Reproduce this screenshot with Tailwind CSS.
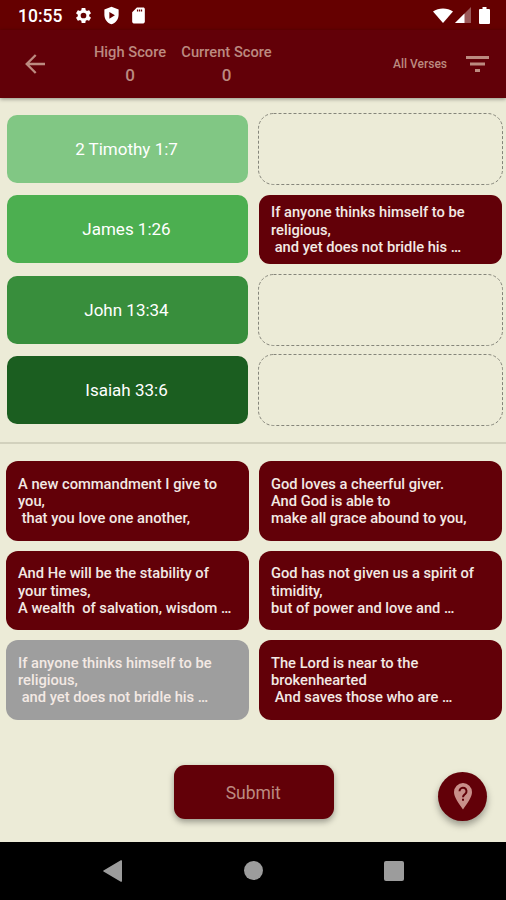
<!DOCTYPE html>
<html lang="en">
<head>
  <meta charset="UTF-8" />
  <meta name="viewport" content="width=device-width, initial-scale=1.0">
  <title>Verse Match</title>
  <script src="https://cdn.jsdelivr.net/npm/@tailwindcss/browser@4"></script>
</head>
<body class="w-[506px] h-[900px] overflow-hidden bg-[#ecebd7] font-['Roboto',sans-serif] flex flex-col">

  <!-- Status bar -->
  <div class="h-[30px] shrink-0 bg-[#650000] text-white flex items-center pl-[18px] pr-[16px]">
    <span class="w-[45px] text-[17.500px] leading-[30px] font-medium whitespace-nowrap pt-[2px]">10:55</span>
    <svg class="w-[19px] h-[19px] ml-[11px]" viewBox="0 0 24 24" fill="currentColor"><path d="M19.14 12.94c.04-.3.06-.61.06-.94s-.02-.64-.07-.94l2.03-1.58a.49.49 0 0 0 .12-.61l-1.92-3.32a.49.49 0 0 0-.59-.22l-2.39.96a7 7 0 0 0-1.62-.94l-.36-2.54a.48.48 0 0 0-.48-.41h-3.84a.48.48 0 0 0-.47.41l-.36 2.54c-.59.24-1.13.57-1.62.94l-2.39-.96a.48.48 0 0 0-.59.22L2.74 8.87a.48.48 0 0 0 .12.61l2.03 1.58c-.05.3-.09.63-.09.94s.02.64.07.94l-2.03 1.58a.49.49 0 0 0-.12.61l1.92 3.32c.12.22.37.29.59.22l2.39-.96c.5.38 1.03.7 1.62.94l.36 2.54c.05.24.24.41.48.41h3.84c.24 0 .44-.17.47-.41l.36-2.54a7 7 0 0 0 1.62-.94l2.39.96c.22.08.47 0 .59-.22l1.92-3.32a.48.48 0 0 0-.12-.61zM12 15.6a3.6 3.6 0 1 1 0-7.2 3.6 3.6 0 0 1 0 7.2z"/></svg>
    <svg class="w-[19px] h-[19px] ml-[9px]" viewBox="0 0 24 24" fill="currentColor" fill-rule="evenodd"><path d="M12 1 3 4.5V11c0 5.5 3.8 10.600 9 12 5.200-1.400 9-6.500 9-12V4.500zM9.300 7.500l7 4.300-7 4.300z"/></svg>
    <svg class="w-[19px] h-[19px] ml-[8px]" viewBox="0 0 24 24" fill="currentColor" fill-rule="evenodd"><path d="M18 2h-8L4 8v12c0 1.100.9 2 2 2h12c1.100 0 2-.9 2-2V4c0-1.100-.9-2-2-2zM10 4.500h1.600v2.500h-1.600zM12.500 4.500h1.600v2.500h-1.600zM15 4.500h1.600v2.500h-1.600z"/></svg>
    <svg class="w-[20px] h-[15px] ml-auto" viewBox="0 0 20 15" fill="currentColor"><path d="M0 3.500C5.500-.6 14.500-.6 20 3.500L10 15z"/></svg>
    <svg class="w-[16px] h-[16px] ml-[2px]" viewBox="0 0 16 16" fill="currentColor"><path d="M16 0v16H0z" opacity=".35"/><path d="M9.500 6.500V16H0z"/></svg>
    <svg class="w-[11px] h-[17px] ml-[8px]" viewBox="0 0 11 17" fill="currentColor"><path d="M3.500 0h4v2H10a1 1 0 0 1 1 1v13a1 1 0 0 1-1 1H1a1 1 0 0 1-1-1V3a1 1 0 0 1 1-1h2.500z"/></svg>
  </div>

  <!-- App bar -->
  <header class="h-[68px] shrink-0 bg-[#620008] text-[#bc8a80] font-medium flex items-center pl-[25px] pr-[17px] shadow-[0_1px_4px_rgba(0,0,0,0.4)]">
    <svg class="w-[20px] h-[20px]" viewBox="0 0 20 20" fill="none" stroke="currentColor" stroke-width="2.300"><path d="M20 10H2M10.700 1 1.700 10l9 9"/></svg>
    <div class="w-[90px] ml-[40px] text-center whitespace-nowrap">
      <div class="text-[14.700px] leading-[22px]">High Score</div>
      <div class="text-[17px] leading-[25px]">0</div>
    </div>
    <div class="w-[103px] text-center whitespace-nowrap">
      <div class="text-[14.700px] leading-[22px]">Current Score</div>
      <div class="text-[17px] leading-[25px]">0</div>
    </div>
    <span class="ml-auto text-[12px] whitespace-nowrap">All Verses</span>
    <svg class="w-[23px] h-[16px] ml-[19px]" viewBox="0 0 23 16" fill="currentColor"><path d="M0 0h23v3H0zM4 6.500h15v3H4zM9 13h5v3H9z"/></svg>
  </header>

  <!-- References and drop slots -->
  <section class="h-[346px] shrink-0 grid grid-cols-[241px_245px] grid-rows-[repeat(4,72px)] gap-x-[10px] gap-y-[8.400px] pt-[15px] pl-[6.500px] items-center border-b-2 border-[#d2d1bd] text-[17px] text-white">
    <div class="h-[68px] rounded-[10px] bg-[#81c784] flex items-center justify-center pt-[2px] pr-[1px]">2 Timothy 1:7</div>
    <svg class="w-[245px] h-[72px]" fill="none" stroke="#85857a"><rect x=".5" y=".5" width="244" height="71" rx="15" stroke-dasharray="3 2"/></svg>

    <div class="h-[68px] rounded-[10px] bg-[#4caf50] flex items-center justify-center pt-[1px] pr-[1px]">James 1:26</div>
    <div class="h-[69px] ml-[1.500px] mr-[.5px] rounded-[11px] bg-[#620008] flex items-center pl-[12px] pt-[2px] text-[14.700px] leading-[17.300px] font-medium text-[#f3e9e4] whitespace-pre">If anyone thinks himself to be
religious,
 and yet does not bridle his …</div>

    <div class="h-[68px] rounded-[10px] bg-[#388e3c] flex items-center justify-center pt-[1px] pr-[1px]">John 13:34</div>
    <svg class="w-[245px] h-[72px]" fill="none" stroke="#85857a"><rect x=".5" y=".5" width="244" height="71" rx="15" stroke-dasharray="3 2"/></svg>

    <div class="h-[68px] rounded-[10px] bg-[#1b5e20] flex items-center justify-center pt-[1px] pr-[1px]">Isaiah 33:6</div>
    <svg class="w-[245px] h-[72px]" fill="none" stroke="#85857a"><rect x=".5" y=".5" width="244" height="71" rx="15" stroke-dasharray="3 2"/></svg>
  </section>

  <!-- Verse cards -->
  <section class="shrink-0 grid grid-cols-[243px_243px] grid-rows-[repeat(3,79.500px)] gap-x-[10px] gap-y-[10px] pt-[17px] pl-[5.500px] text-[14.700px] leading-[17.400px] font-medium text-[#f3e9e4]">
    <div class="rounded-[12px] bg-[#620008] flex items-center pl-[12.500px] pt-[2px] whitespace-pre">A new commandment I give to
you,
 that you love one another,</div>
    <div class="rounded-[12px] bg-[#620008] flex items-center pl-[12.500px] pt-[2px] whitespace-pre">God loves a cheerful giver.
And God is able to
make all grace abound to you,</div>
    <div class="rounded-[12px] bg-[#620008] flex items-center pl-[12.500px] pt-[2px] whitespace-pre">And He will be the stability of
your times,
A wealth  of salvation, wisdom …</div>
    <div class="rounded-[12px] bg-[#620008] flex items-center pl-[12.500px] pt-[2px] whitespace-pre">God has not given us a spirit of
timidity,
but of power and love and …</div>
    <div class="rounded-[12px] bg-[#9e9e9e] flex items-center pl-[12.500px] pt-[2px] whitespace-pre">If anyone thinks himself to be
religious,
 and yet does not bridle his …</div>
    <div class="rounded-[12px] bg-[#620008] flex items-center pl-[12.500px] pt-[2px] whitespace-pre">The Lord is near to the
brokenhearted
 And saves those who are …</div>
  </section>

  <!-- Actions -->
  <div class="flex-1 flex items-start pt-[45px] pl-[174px]">
    <button class="w-[159.500px] h-[54px] pt-[3px] pr-[1px] rounded-[11px] bg-[#620008] text-[#bc8a80] text-[17.500px] shadow-[0_3px_6px_rgba(0,0,0,0.35)]">Submit</button>
    <button class="w-[49px] h-[49px] ml-[104.500px] mt-[7px] rounded-full bg-[#620008] text-[#c98f8a] flex items-center justify-center shadow-[0_4px_7px_rgba(0,0,0,0.35)]" aria-label="Help">
      <svg class="w-[18px] h-[27px]" viewBox="0 0 18 27"><path fill="currentColor" d="M9 0a9 9 0 0 0-9 9c0 5 4.500 11 9 17.500C13.500 20 18 14 18 9a9 9 0 0 0-9-9z"/><path fill="none" stroke="#620008" stroke-width="2" d="M5.500 8.200a3.500 3.500 0 1 1 5.700 2.700C9.900 12 9 12.500 9 14.300"/><path fill="#620008" d="M8 15.700h2v2H8z"/></svg>
    </button>
  </div>

  <!-- Navigation bar -->
  <nav class="h-[58.500px] shrink-0 bg-black text-[#9c9c9c] flex items-center pl-[103px]">
    <svg class="w-[19px] h-[22px]" viewBox="0 0 19 22" fill="currentColor"><path d="M19 1v20a.8.8 0 0 1-1.200.7L.5 11.600a.8.8 0 0 1 0-1.200L17.800.3A.8.8 0 0 1 19 1z"/></svg>
    <div class="w-[19px] h-[19px] ml-[122px] rounded-full bg-[#9c9c9c]"></div>
    <div class="w-[19.500px] h-[19.500px] ml-[121px] rounded-[2px] bg-[#9c9c9c]"></div>
  </nav>

</body>
</html>
